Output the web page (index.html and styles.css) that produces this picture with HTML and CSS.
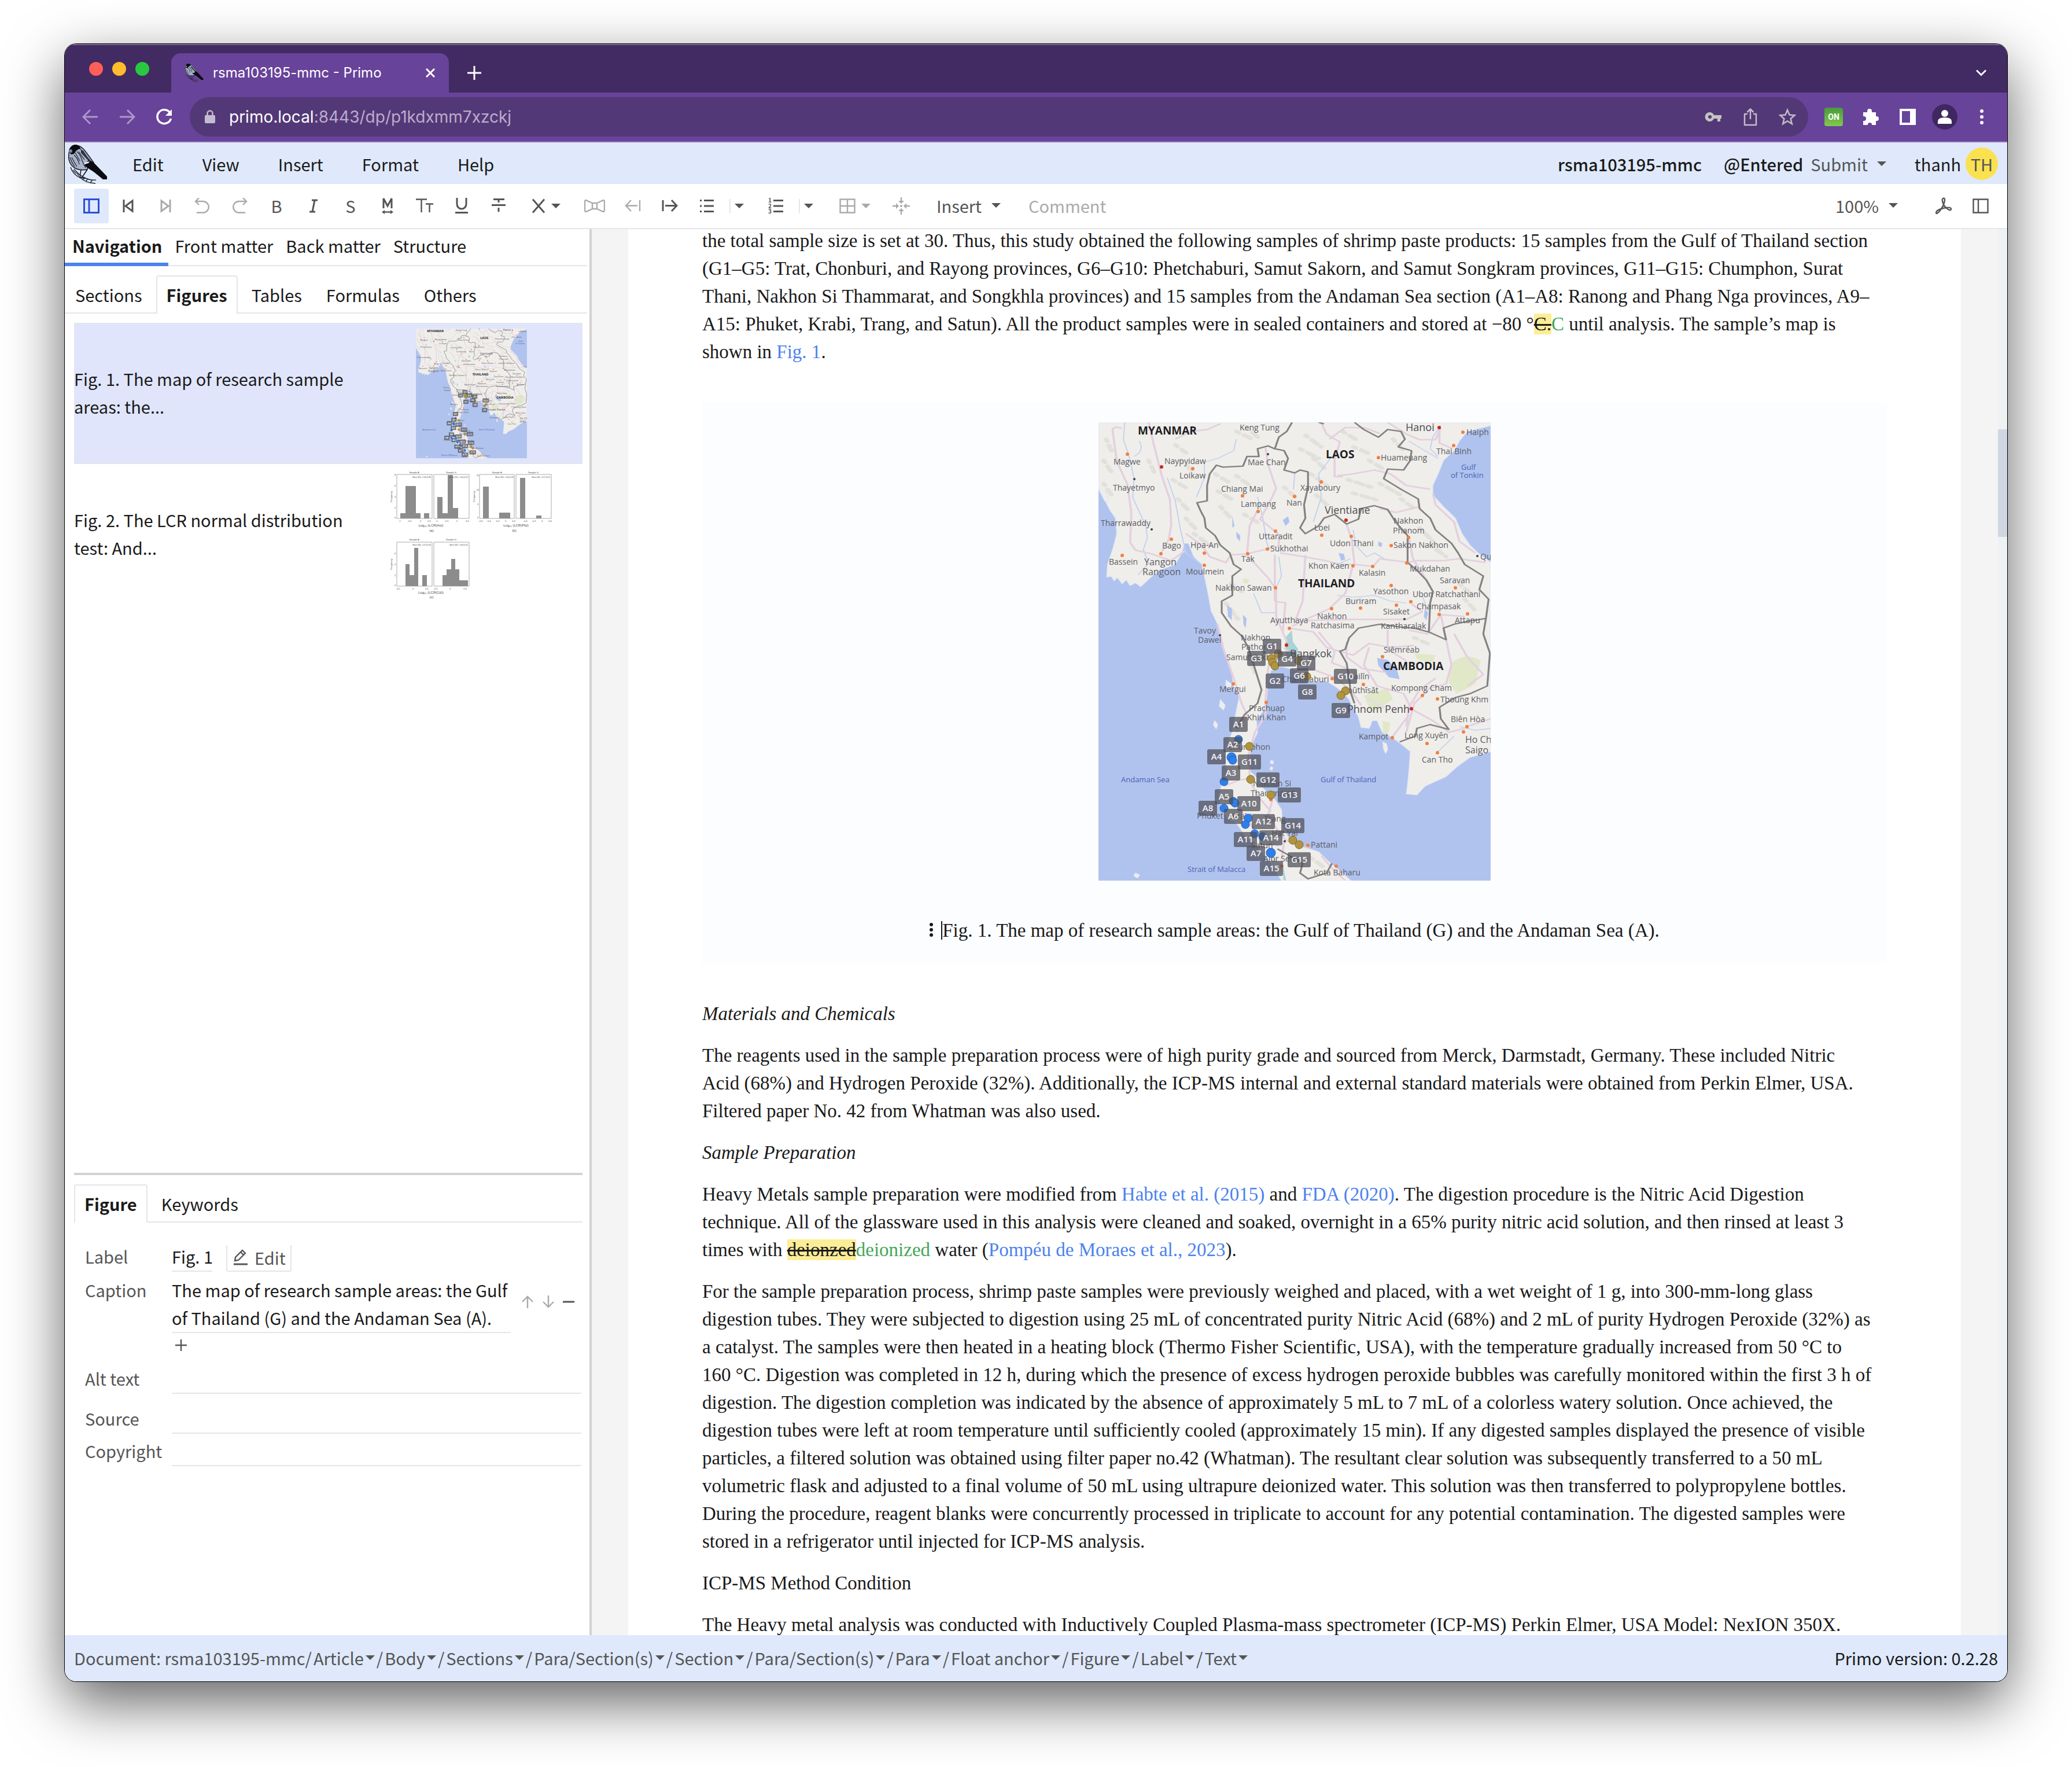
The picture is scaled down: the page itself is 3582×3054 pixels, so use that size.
FILE: index.html
```html
<!DOCTYPE html>
<html lang="en">
<head>
<meta charset="utf-8">
<title>rsma103195-mmc - Primo</title>
<link rel="stylesheet" href="styles.css">
</head>
<body>
<svg class="defs" aria-hidden="true">
  <symbol id="bird" viewBox="0 0 68 68">
    <path d="M2 9 Q6 0 14 1 Q24 3 30 12 L44 31 Q32 40 33 43 Q16 46 7 37 Q-1 28 1 16 Z" fill="#a9b4cb" stroke="#15181f" stroke-width="1.500"/>
    <path d="M1 12 Q3 1 12 0 Q20 1 21 7 Q14 8 10 16 L5 17 Z" fill="#0b0c10"/>
    <circle cx="4" cy="11" r="3" fill="#7f8899"/>
    <path d="M20 7 Q26 11 28 20 M15 12 Q22 18 24 28 M10 18 Q17 24 19 34 M6 22 Q10 30 15 38 M25 10 L38 30 M3 22 Q6 31 11 38 M18 12 L28 26 M23 26 L30 40 M12 14 L20 28" stroke="#1d212b" stroke-width="1.2" fill="none"/>
    <path d="M30 32 L36 26 L44 31 L67 55 L67 60 L60 60 L44 47 L33 40 L28 36 Z" fill="#0b0c10"/>
    <path d="M22 9 L40 29 L36 29 L22 14 Z" fill="#2a2f3b"/>
    <path d="M28 31 L37 29 L35 32 L28 34 Z" fill="#eef3fc"/>
    <path d="M33 43 L24 56 M22 44 L20 56 L28 58" stroke="#0b0c10" stroke-width="1.500" fill="none"/>
    <path d="M4 39 Q8 52 22 58 Q30 66 47 67 M10 42 Q18 52 26 56 Q36 62 48 61 M8 44 L14 50 M14 46 L18 54 M24 60 L30 58 M30 64 L34 59 M38 66 L42 61" stroke="#2a2f3b" stroke-width="1.500" fill="none"/>
  </symbol>

  <symbol id="map" viewBox="0 0 678 792">
    <rect width="678" height="792" fill="#b0c3ee"/>
    <g transform="matrix(.4591 0 0 .3333 -18.8 -21)" stroke-linejoin="round">
      <path class="land" d="M41 63V410L70 480 85 520 105 560 110 640 95 720 75 800 72 865 90 862 100 885 112 868 130 900 146 880 160 910 180 895 200 915 235 870 270 830 330 800 355 740 365 690 380 690 400 760 430 800 440 860 455 960 465 1040 490 1110 500 1170 520 1270 545 1380 550 1440 572 1480 560 1560 545 1670 520 1750 520 1810 525 1870 505 1940 495 2000 505 2070 530 2120 560 2140 600 2220 650 2280 690 2350 730 2438H990L960 2400 915 2350 870 2290 800 2260 760 2230 735 2160 730 2070 700 2010 660 1960 640 1910 610 1870 600 1790 620 1730 640 1670 635 1610 660 1560 675 1490 680 1410 690 1350 730 1330 790 1350 810 1400 850 1410 900 1405 930 1430 960 1460 985 1500 1000 1540 1020 1590 1030 1645 1060 1650 1072 1610 1090 1610 1110 1670 1150 1700 1180 1730 1215 1770 1210 1870 1205 1940 1200 1990 1240 1995 1270 1950 1350 1900 1390 1850 1440 1800 1518 1770V790L1470 740 1440 700 1410 640 1385 560 1340 500 1300 440 1300 390 1320 330 1340 260 1380 210 1400 160 1430 110 1518 80V63Z"/>
      <path class="land" d="M1112 1720l14 10 4 30-8 20-8-25zM690 1815l10 5-2 15-10-4zM690 1848l8 6-4 14-8-6zM500 1500l18 30-6 25-16-20zM478 1610l12 20-6 22-10-20zM522 1400l20 20-8 30-14-24zM42 400l26 20 10 60-14-10zM180 2400l16 10-8 16-14-12z"/>
      <path d="M1370 1310q60-60 110-10l-20 120-70 50-30-60zM1040 1480l90-40 20 60-80 70zM1230 1260l80 10-10 40-60-20zM1110 1610l30 10-6 50-20 10zM590 870l20 10-10 20-16-6z" fill="#e0e8c8"/>
      <path class="relief" d="M330 180l40 40M350 260l50 60M320 360l60 50M340 460l40 60M560 110l60 40M600 90l50 60M480 330l60 50M490 420l50 40M500 500l40 60M560 340l50 50M820 130l60 60M800 200l70 50M850 250l50 60M960 110l60 50M1000 190l70 40M1060 260l60 50M980 360l90 40M1000 430l100 40M1100 380l80 60M1180 460l50 50M1250 610l50 70M1290 700l60 60M1400 900l50 60M1420 980l40 60M70 150l20 60M60 260l30 60M60 380l30 60M230 260l20 60M370 560l40 60M400 640l60 60M520 1000l50 90M540 900l40 40M590 540l60 50M740 400l50 60M840 330l60 60M860 440l50 60M1230 1180l50 30M1060 1500l50 40M600 1280l30 80M700 2330l30 60M840 2320l50 50M1150 150l40 60"/>
      <path class="river" d="M140 63l-5 90 20 80 20 120-5 100 30 90 20 60 5 60-15 60 20 70-40 60M195 160q20 50-20 80M560 150l-10 60-60 40-50 20 0 80-30 100M300 350l30 120 20 150 20 120 60 60M640 450l20 110 15 130 10 30M780 330l-5 80M920 240l-50 90 10 120-30 130M1000 620l10 80 40 60 30-20 50 40M1210 160l60 50 50 40M940 960l60 10 80-10 60 30 60 10M720 760l10 100-20 60M625 950l30 100 50 0M1330 80l-30 60-10 60 30 40M1260 960l20 80M1400 1640l60 20 58-10M1380 1690l-60 80M900 780l40 20 50-30"/>
      <path class="lake" d="M735 570l20-20 5 30-15 20zM545 550l8 50-8 10zM560 630l15 20-2 30-12-20zM525 1010l18 20 0 60-14-20zM585 1060l14 20-4 50-8-20zM945 740l20 5 5 30-15 5zM1090 1285l40 10 35 50 10 50-40-10-40-60zM1270 1030l12 20-6 40-10-20zM1095 680l15 10-4 20-12-8z"/>
      <path d="M745 1180l24-40 4 60 20 40-6 50-40 0zM735 2350l12 88h-10z" fill="#a9d3d6"/>
      <path class="road" d="M130 95q-40-20-35 20l15 150 40 120 15 150-5 150 20 40 60 20 75 35 50-50M230 63l20 120 30 160 30 120 5 130-10 80-25 60M330 150l60-40 60-10 50-30M370 640l60 60 30 60 60 30 20-40 60-5 120-40 0-60-70-80 40-100 20-60-30-120-10-90M640 520l-30 80-10 150 80 120 30 60 0 140 40 130M725 740l90 20 80 20 60 20 45 0M705 750l0 240 40 10-10 150M820 750l-10 240-30 110M1000 800l-30 150-60 80-80 50-60 40M975 590l20 80 10 130 70 10 25-40 110 20 20-10 110 0 60-10 100 20M960 345l-30 0 0-90 20-90-50-40-20-60M940 340l60-10 80-20 60 20 60 60 90 20M910 150l60-60 70 0 60 30M1130 63l70 60 50 30 60 0 20-60M1325 90l0 80 50 30M1300 430l10 60 70 90 20 100 60 60M1100 510l60 20 90-30M1210 660l15 110 60 130 20 50M830 1090l170-5 200 0 60-40-40-40M1210 1140l70 20 50-100 90 10M1330 1060l20 130 20 130-20 100-60 20-60 80-30 150M760 1130l90 20 50 80 100 40 60-60 80 20 90-10M975 1200l0 80 60 60 90 20M870 1150l60 100-10 60 60 30M740 1230l60 90 60 30 80 40 60 80 30 60M490 1110l20 120 40 160 30 130 20 60-40 90M700 1200l-20 140-10 160 0 80-40 90-20 100 0 150 30 80 50 80M515 1950l50-30 40-10M700 2000l-20 100 50 110 40 40 60 20M580 2080l60 120 80 60M740 2240l-10 90M880 2310l50 80 40 48M1200 1640l10-100 40-90 60-60M1220 1550l80 60 60 60 60-20M1150 1690l60-110M1380 1160l50 120 60 90-60 60M1060 1230l-20 90 50 110 100 40 30 80M1430 1640l88-40M1130 1140l0 100 70 60"/>
      <path class="border" d="M770 63l-20 47-30 30-15 60-25-15-40 15 5 40-45 0-15 50-75 5-25-10-25 45-10 60 0 80-38 10 13 40 15 40 5 50 35 40 20 50 35 40 15 60 28 25-33 35 0 100-40 30 0 60 35 70 40 50 25 60 25 110 25 110-15 70-50 60-30 70M705 200l35 10 15 40-15 60 40 15 20-15 30 10 0 80-15 90 5 70-20 50 20 30 50-40 20-40 40-20 45 50 45-25 10-55 50-15 50 20 30 65 45 70 0 140 35 40 35 50 25 60-10 60-5 150-55-20-50-5-80-15-80 20-35 50-15 60-20 10 25 60 10 80 5 70 15 60M1005 63l35 37 55 40 35-40 50 10 15 40-25 40 50 20-5 50-25 50-60-5-15 50 65 55 65 50 5 50 40 50 20 60 60 70 25 50 25 60 70 60-15 70 35 50-10 100-70 15-50 15-40 20 10 60-65-40M1500 1080l-10 80 25 100-10 170-65 40-55 20-60 50 5 60 30 55-70-25-50 20-5 40-60 30M715 2275l45 35 50 40-10 50 30 30 70-30 20-50M870 63l20 8"/>
    </g>
    <g class="towns">
      <circle cx="50" cy="55" r="3"/><circle cx="163" cy="80" r="3"/><circle cx="249" cy="127" r="3"/><circle cx="339" cy="128" r="3"/><circle cx="385" cy="103" r="3"/><circle cx="276" cy="154" r="3"/><circle cx="484" cy="61" r="3"/><circle cx="614" cy="40" r="3"/><circle cx="630" cy="17" r="3"/><circle cx="306" cy="188" r="3"/><circle cx="386" cy="195" r="3"/><circle cx="437" cy="197" r="3"/><circle cx="536" cy="199" r="3"/><circle cx="506" cy="213" r="3"/><circle cx="292" cy="219" r="3"/><circle cx="258" cy="227" r="3"/><circle cx="126" cy="202" r="3"/><circle cx="108" cy="227" r="3"/><circle cx="41" cy="230" r="3"/><circle cx="183" cy="226" r="3"/><circle cx="183" cy="247" r="3"/><circle cx="440" cy="248" r="3"/><circle cx="474" cy="249" r="3"/><circle cx="533" cy="243" r="3"/><circle cx="306" cy="286" r="3"/><circle cx="506" cy="282" r="3"/><circle cx="617" cy="286" r="3"/><circle cx="403" cy="322" r="3"/><circle cx="453" cy="321" r="3"/><circle cx="515" cy="316" r="3"/><circle cx="540" cy="310" r="3"/><circle cx="589" cy="332" r="3"/><circle cx="638" cy="331" r="3"/><circle cx="330" cy="356" r="3"/><circle cx="491" cy="405" r="3"/><circle cx="404" cy="443" r="3"/><circle cx="458" cy="453" r="3"/><circle cx="560" cy="472" r="3"/><circle cx="586" cy="478" r="3"/><circle cx="233" cy="452" r="3"/><circle cx="290" cy="484" r="3"/><circle cx="508" cy="545" r="3"/><circle cx="568" cy="555" r="3"/><circle cx="586" cy="571" r="3"/><circle cx="637" cy="526" r="3"/><circle cx="631" cy="535" r="3"/><circle cx="298" cy="652" r="3"/><circle cx="362" cy="731" r="3"/><circle cx="411" cy="767" r="3"/><circle cx="317" cy="767" r="3"/>
    </g>
    <g fill="#c8281e"><circle cx="109" cy="77" r="3"/><circle cx="589" cy="9" r="3"/><circle cx="428" cy="169" r="3"/><circle cx="325" cy="385" r="3"/><circle cx="541" cy="495" r="3"/></g>
    <g fill="#3c3c46"><circle cx="62" cy="98" r="2"/><circle cx="293" cy="55" r="2"/><circle cx="92" cy="185" r="2"/><circle cx="655" cy="231" r="2"/><circle cx="529" cy="340" r="2"/><circle cx="210" cy="368" r="2"/><circle cx="322" cy="724" r="2"/></g>
    <g class="place">
      <text x="244" y="14">Keng Tung</text><text x="636" y="22">Haiph</text><text x="584" y="55">Thai Binh</text><text x="26" y="73">Magwe</text><text x="114" y="72">Naypyidaw</text><text x="140" y="97">Loikaw</text><text x="258" y="74">Mae Chan</text><text x="488" y="66">Huameuang</text><text x="25" y="118">Thayetmyo</text><text x="212" y="120">Chiang Mai</text><text x="349" y="118">Xayaboury</text><text x="246" y="146">Lampang</text><text x="325" y="144">Nan</text><text x="510" y="175">Nakhon</text><text x="509" y="192">Phanom</text><text x="4" y="179">Tharrawaddy</text><text x="373" y="187">Loei</text><text x="277" y="202">Uttaradit</text><text x="400" y="214">Udon Thani</text><text x="110" y="218">Bago</text><text x="159" y="217">Hpa-An</text><text x="510" y="217">Sakon Nakhon</text><text x="297" y="223">Sukhothai</text><text x="247" y="241">Tak</text><text x="18" y="246">Bassein</text><text x="151" y="263">Moulmein</text><text x="363" y="253">Khon Kaen</text><text x="450" y="265">Kalasin</text><text x="538" y="258">Mukdahan</text><text x="660" y="237">Qu</text><text x="202" y="291">Nakhon Sawan</text><text x="590" y="278">Saravan</text><text x="475" y="297">Yasothon</text><text x="543" y="302">Ubon Ratchathani</text><text x="427" y="314">Buriram</text><text x="492" y="332">Sisaket</text><text x="550" y="323">Champasak</text><text x="378" y="340">Nakhon</text><text x="367" y="356">Ratchasima</text><text x="297" y="347">Ayutthaya</text><text x="488" y="357">Kantharalak</text><text x="616" y="347">Attapu</text><text x="165" y="365">Tavoy</text><text x="172" y="381">Dawei</text><text x="246" y="377">Nakhon</text><text x="247" y="393">Pathom</text><text x="493" y="398">Siĕmréab</text><text x="221" y="411">Samut Sakhon</text><text x="317" y="449">Chanthaburi</text><text x="433" y="444">Pailĭn</text><text x="422" y="468">Poŭthĭsăt</text><text x="506" y="464">Kompong Cham</text><text x="591" y="484">Tboung Khm</text><text x="209" y="466">Mergui</text><text x="260" y="499">Prachuap</text><text x="257" y="515">Khiri Khan</text><text x="609" y="518">Biên Hòa</text><text x="450" y="548">Kampot</text><text x="529" y="546">Long Xuyên</text><text x="224" y="566">Chumphon</text><text x="559" y="588">Can Tho</text><text x="267" y="629">Nakhon Si</text><text x="263" y="646">Thammarat</text><text x="170" y="685">Phuket</text><text x="231" y="686">Krabi</text><text x="286" y="690">Trang</text><text x="299" y="715">Hat Yai</text><text x="264" y="736">Satun</text><text x="367" y="735">Pattani</text><text x="285" y="759">Alor Setar</text><text x="372" y="783">Kota Baharu</text>
    </g>
    <g class="place city">
      <text x="531" y="15">Hanoi</text><text x="391" y="158">Vientiane</text><text x="331" y="406">Bangkok</text><text x="430" y="502">Phnom Penh</text>
    </g>
    <g class="place town">
      <text x="79" y="247">Yangon</text><text x="76" y="264">Rangoon</text><text x="634" y="554">Ho Ch</text><text x="634" y="572">Saigo</text>
    </g>
    <g class="place sea">
      <text x="627" y="82">Gulf</text><text x="609" y="96">of Tonkin</text><text x="39" y="622">Andaman Sea</text><text x="384" y="622">Gulf of Thailand</text><text x="154" y="777">Strait of Malacca</text>
    </g>
    <g class="place country">
      <text x="68" y="21">MYANMAR</text><text x="393" y="62">LAOS</text><text x="345" y="285">THAILAND</text><text x="492" y="428">CAMBODIA</text>
    </g>
    <g class="dot-a">
      <circle cx="242" cy="548" r="7"/><circle cx="230" cy="579" r="8"/><circle cx="232" cy="584" r="7"/><circle cx="217" cy="621" r="7"/><circle cx="233" cy="655" r="7"/><circle cx="236" cy="658" r="7"/><circle cx="217" cy="667" r="7"/><circle cx="259" cy="684" r="7"/><circle cx="254" cy="695" r="7"/><circle cx="270" cy="711" r="7"/><circle cx="284" cy="716" r="7"/><circle cx="298" cy="744" r="8"/>
    </g>
    <g class="dot-g">
      <circle cx="311" cy="400" r="7"/><circle cx="299" cy="408" r="7"/><circle cx="301" cy="415" r="7"/><circle cx="305" cy="421" r="7"/><circle cx="346" cy="412" r="7"/><circle cx="360" cy="439" r="7"/><circle cx="427" cy="464" r="7"/><circle cx="419" cy="472" r="7"/><circle cx="261" cy="560" r="7"/><circle cx="263" cy="617" r="7"/><circle cx="298" cy="644" r="7"/><circle cx="336" cy="722" r="7"/><circle cx="347" cy="730" r="7"/>
    </g>
    <g class="badges">
      <g transform="translate(300 387)"><rect x="-16" y="-13" width="32" height="26" rx="3"/><text y="5">G1</text></g>
      <g transform="translate(273 408)"><rect x="-16" y="-13" width="32" height="26" rx="3"/><text y="5">G3</text></g>
      <g transform="translate(326 409)"><rect x="-16" y="-13" width="32" height="26" rx="3"/><text y="5">G4</text></g>
      <g transform="translate(359 416)"><rect x="-16" y="-13" width="32" height="26" rx="3"/><text y="5">G7</text></g>
      <g transform="translate(347 438)"><rect x="-16" y="-13" width="32" height="26" rx="3"/><text y="5">G6</text></g>
      <g transform="translate(305 447)"><rect x="-16" y="-13" width="32" height="26" rx="3"/><text y="5">G2</text></g>
      <g transform="translate(361 466)"><rect x="-16" y="-13" width="32" height="26" rx="3"/><text y="5">G8</text></g>
      <g transform="translate(427 439)"><rect x="-20" y="-13" width="40" height="26" rx="3"/><text y="5">G10</text></g>
      <g transform="translate(419 498)"><rect x="-16" y="-13" width="32" height="26" rx="3"/><text y="5">G9</text></g>
      <g transform="translate(242 522)"><rect x="-16" y="-13" width="32" height="26" rx="3"/><text y="5">A1</text></g>
      <g transform="translate(232 557)"><rect x="-16" y="-13" width="32" height="26" rx="3"/><text y="5">A2</text></g>
      <g transform="translate(204 578)"><rect x="-16" y="-13" width="32" height="26" rx="3"/><text y="5">A4</text></g>
      <g transform="translate(261 587)"><rect x="-20" y="-13" width="40" height="26" rx="3"/><text y="5">G11</text></g>
      <g transform="translate(229 606)"><rect x="-16" y="-13" width="32" height="26" rx="3"/><text y="5">A3</text></g>
      <g transform="translate(293 618)"><rect x="-20" y="-13" width="40" height="26" rx="3"/><text y="5">G12</text></g>
      <g transform="translate(330 644)"><rect x="-20" y="-13" width="40" height="26" rx="3"/><text y="5">G13</text></g>
      <g transform="translate(217 647)"><rect x="-16" y="-13" width="32" height="26" rx="3"/><text y="5">A5</text></g>
      <g transform="translate(260 659)"><rect x="-20" y="-13" width="40" height="26" rx="3"/><text y="5">A10</text></g>
      <g transform="translate(189 667)"><rect x="-16" y="-13" width="32" height="26" rx="3"/><text y="5">A8</text></g>
      <g transform="translate(233 681)"><rect x="-16" y="-13" width="32" height="26" rx="3"/><text y="5">A6</text></g>
      <g transform="translate(285 690)"><rect x="-20" y="-13" width="40" height="26" rx="3"/><text y="5">A12</text></g>
      <g transform="translate(336 697)"><rect x="-20" y="-13" width="40" height="26" rx="3"/><text y="5">G14</text></g>
      <g transform="translate(254 721)"><rect x="-20" y="-13" width="40" height="26" rx="3"/><text y="5">A11</text></g>
      <g transform="translate(298 718)"><rect x="-20" y="-13" width="40" height="26" rx="3"/><text y="5">A14</text></g>
      <g transform="translate(272 745)"><rect x="-16" y="-13" width="32" height="26" rx="3"/><text y="5">A7</text></g>
      <g transform="translate(347 756)"><rect x="-20" y="-13" width="40" height="26" rx="3"/><text y="5">G15</text></g>
      <g transform="translate(299 771)"><rect x="-20" y="-13" width="40" height="26" rx="3"/><text y="5">A15</text></g>
    </g>
  </symbol>
</svg>

<div class="window">
  <header class="titlebar">
    <div class="lights">
      <button class="light red" aria-label="Close"></button>
      <button class="light amber" aria-label="Minimise"></button>
      <button class="light green" aria-label="Zoom"></button>
    </div>
    <div class="browser-tab">
      <svg class="favicon"><use href="#bird"/></svg>
      <span class="tab-title">rsma103195-mmc - Primo</span>
      <button class="plain" aria-label="Close tab"><svg width="16" height="16" viewBox="0 0 16 16"><path d="M1 1L15 15M15 1L1 15" class="w3"/></svg></button>
    </div>
    <button class="plain new-tab" aria-label="New tab"><svg width="24" height="24" viewBox="0 0 24 24"><path d="M12 0V24M0 12H24" class="w3"/></svg></button>
    <button class="plain tab-search" aria-label="Search tabs"><svg width="18" height="12" viewBox="0 0 18 12"><path d="M1 1.500L9 9.500L17 1.500" class="w3"/></svg></button>
  </header>

  <div class="addressbar">
    <div class="history">
      <button class="plain" aria-label="Back"><svg width="28" height="28" viewBox="0 0 28 28" class="faded"><path d="M27 14H2M14 2L2 14L14 26" class="w3"/></svg></button>
      <button class="plain" aria-label="Forward"><svg width="28" height="28" viewBox="0 0 28 28" class="faded"><path d="M1 14H26M14 2L26 14L14 26" class="w3"/></svg></button>
      <button class="plain" aria-label="Reload"><svg width="28" height="28" viewBox="0 0 28 28"><path d="M24 7A12 12 0 1 0 25.500 17" fill="none" stroke="#fff" stroke-width="3.500"/><path d="M27 1V12H16Z" fill="#fff"/></svg></button>
    </div>
    <div class="url">
      <svg width="18" height="24" viewBox="0 0 18 24"><rect y="9" width="18" height="14" rx="2" fill="#c3bccf"/><path d="M4.500 10V6a4.500 4.500 0 0 1 9 0V10" fill="none" stroke="#c3bccf" stroke-width="2.500"/></svg>
      <span class="address">primo.local<span class="path">:8443/dp/p1kdxmm7xzckj</span></span>
      <button class="plain" aria-label="Passwords"><svg width="32" height="32" viewBox="0 0 32 32"><path fill-rule="evenodd" d="M10 8a8 8 0 1 0 7 11h6v5h5v-5h2v-6H17A8 8 0 0 0 10 8Zm0 5a3 3 0 1 1 0 6a3 3 0 0 1 0-6Z" fill="#c3c3c3"/></svg></button>
      <button class="plain" aria-label="Share"><svg width="32" height="32" viewBox="0 0 32 32"><path d="M11 11H6V30H26V11H21M16 20V3M10.500 8L16 2.500L21.500 8" fill="none" stroke="#c3bcc9" stroke-width="2.500" stroke-linejoin="round"/></svg></button>
      <button class="plain" aria-label="Bookmark"><svg width="32" height="32" viewBox="0 0 32 32"><path d="M16 4L19.500 12.500L28.500 13.200L21.600 19.200L23.800 28L16 23.200L8.200 28L10.400 19.200L3.500 13.200L12.500 12.500Z" fill="none" stroke="#c3bcc9" stroke-width="2.500"/></svg></button>
    </div>
    <div class="extensions">
      <button class="plain on-badge">ON</button>
      <button class="plain" aria-label="Extensions"><svg width="32" height="32" viewBox="0 0 32 32"><path d="M3 8H10V6a4 4 0 0 1 8 0V8H25V15h1a4 4 0 0 1 0 8H25V30H18V28a4 4 0 0 0-7 0V30H3V23H4a4 4 0 0 0 0-8H3Z" fill="#fff"/></svg></button>
      <button class="plain" aria-label="Side panel"><svg width="32" height="32" viewBox="0 0 32 32"><path fill-rule="evenodd" d="M2 2H30V30H2ZM6 6V26H20V6Z" fill="#fff"/></svg></button>
      <button class="plain" aria-label="Profile"><svg width="44" height="44" viewBox="0 0 44 44"><circle cx="22" cy="22" r="22" fill="#3f2762"/><circle cx="22" cy="16" r="6" fill="#fff"/><path d="M10 34V30q0-7 12-7t12 7V34Z" fill="#fff"/></svg></button>
      <button class="plain" aria-label="Menu"><svg width="32" height="32" viewBox="0 0 32 32" fill="#fff"><circle cx="16" cy="6" r="3"/><circle cx="16" cy="16" r="3"/><circle cx="16" cy="26" r="3"/></svg></button>
    </div>
  </div>

  <header class="appbar">
    <svg class="logo"><use href="#bird"/></svg>
    <nav class="menus"><button>Edit</button><button>View</button><button>Insert</button><button>Format</button><button>Help</button></nav>
    <strong class="doc-name">rsma103195-mmc</strong>
    <strong>@Entered</strong>
    <button class="submit">Submit <i class="caret"></i></button>
    <span class="user">thanh</span><span class="avatar">TH</span>
  </header>

  <div class="toolbar">
    <button class="tool active" aria-label="Left panel"><svg width="28" height="28" viewBox="0 0 28 28"><path d="M1.500 2.500H26.500V25.500H1.500ZM10 2.500V25.500" class="s3"/></svg></button>
    <button class="tool" aria-label="Previous"><svg width="28" height="28" viewBox="0 0 28 28"><path d="M6 3V25M21 5V23L9 14Z" class="s3"/></svg></button>
    <button class="tool off" aria-label="Next"><svg width="28" height="28" viewBox="0 0 28 28"><path d="M22 3V25M7 5V23L19 14Z" class="s3"/></svg></button>
    <button class="tool off" aria-label="Undo"><svg width="28" height="28" viewBox="0 0 28 28"><path d="M8 0L2 6L8 12M2 6H15a9.500 9.500 0 0 1 0 19.500H4" class="s2"/></svg></button>
    <button class="tool off" aria-label="Redo"><svg width="28" height="28" viewBox="0 0 28 28"><path d="M20 0L26 6L20 12M26 6H13a9.500 9.500 0 0 0 0 19.500H24" class="s2"/></svg></button>
    <button class="tool letter">B</button>
    <button class="tool" aria-label="Italic"><svg width="28" height="28" viewBox="0 0 28 28"><path d="M11 4H21M7 24H17M16 4L12 24" class="s3"/></svg></button>
    <button class="tool letter">S</button>
    <button class="tool" aria-label="Monospace"><svg width="32" height="36" viewBox="0 0 32 36"><path d="M9 22V5L16 18L23 5V22" class="s3"/><path d="M8 28.500H24" class="s2"/><path d="M11 25V32L6 28.500ZM21 25V32L26 28.500Z" fill="currentColor"/></svg></button>
    <button class="tool" aria-label="Small caps"><svg width="32" height="36" viewBox="0 0 32 36"><path d="M1 6.500H20M10.500 6.500V29M18 14.500H31M24.500 14.500V29" class="s2"/></svg></button>
    <button class="tool" aria-label="Underline"><svg width="32" height="36" viewBox="0 0 32 36"><path d="M8 4V15a8 8 0 0 0 16 0V4M5 29.500H27" class="s3"/></svg></button>
    <button class="tool" aria-label="Strikethrough"><svg width="32" height="36" viewBox="0 0 32 36"><path d="M7 6.500H26M16 6V12M4 16.500H28M16 21V28" class="s3"/></svg></button>
    <button class="tool wide" aria-label="Scripts"><svg width="24" height="28" viewBox="0 0 24 28"><path d="M2 2.500L22 25.500M22 2.500L2 25.500" class="s3"/></svg><i class="caret"></i></button>
    <button class="tool off ligature" aria-label="Ligature"><svg width="36" height="28" viewBox="0 0 36 28"><path d="M14 9L3 4Q1 4 1 7V21Q1 24 3 24L14 19ZM22 9L33 4Q35 4 35 7V21Q35 24 33 24L22 19ZM14 9H22V19H14Z" class="s2"/></svg></button>
    <button class="tool off" aria-label="Outdent"><svg width="28" height="28" viewBox="0 0 28 28"><path d="M26 4V23M22 13.500H2M11 4L2 13.500L11 23" class="s2"/></svg></button>
    <button class="tool" aria-label="Indent"><svg width="28" height="28" viewBox="0 0 28 28"><path d="M2 4V23M6 13.500H26M17 4L26 13.500L17 23" class="s3"/></svg></button>
    <button class="tool" aria-label="Bulleted list"><svg width="28" height="28" viewBox="0 0 28 28"><path d="M9 4.500H26M9 14H26M9 23.500H26M2 4.500H5M2 14H5M2 23.500H5" class="s3"/></svg></button>
    <button class="tool drop" aria-label="List style"><i class="caret"></i></button>
    <button class="tool" aria-label="Numbered list"><svg width="28" height="28" viewBox="0 0 28 28"><path d="M9 4.500H26M9 14H26M9 23.500H26" class="s3"/><text x="3" y="8" class="t9">1</text><text x="3" y="18" class="t9">2</text><text x="3" y="27" class="t9">3</text></svg></button>
    <button class="tool drop" aria-label="Number style"><i class="caret"></i></button>
    <button class="tool table off" aria-label="Table"><svg width="28" height="28" viewBox="0 0 28 28"><path d="M1.500 2.500H26.500V25.500H1.500ZM14 2.500V25.500M1.500 14H26.500" class="s2"/></svg><i class="caret"></i></button>
    <button class="tool off" aria-label="Centre"><svg width="32" height="32" viewBox="0 0 32 32"><path d="M16 1V11M16 31V21M1 16H11M31 16H21" class="s2"/><path d="M11 7H21L16 12ZM11 25H21L16 20ZM7 11V21L12 16ZM25 11V21L20 16Z" fill="currentColor"/><circle cx="16" cy="16" r="2" fill="currentColor"/></svg></button>
    <button class="tool words">Insert <i class="caret"></i></button>
    <button class="tool words off">Comment</button>
    <span class="spacer"></span>
    <button class="tool words zoom">100% <i class="caret"></i></button>
    <button class="tool" aria-label="PDF"><svg width="32" height="32" viewBox="0 0 32 32"><path d="M15 3Q18 1 18 6Q17 15 9 25Q4 31 3 28Q3 23 15 20Q28 17 29 21Q29 25 24 22Q16 17 14 8Q13 4 15 3Z" class="s2"/></svg></button>
    <button class="tool" aria-label="Right panel"><svg width="28" height="28" viewBox="0 0 28 28"><path d="M1.500 2.500H26.500V25.500H1.500ZM10 2.500V25.500" class="s2"/></svg></button>
  </div>

  <div class="workspace">
    <aside class="sidebar">
      <nav class="main-tabs"><button class="current">Navigation</button><button>Front matter</button><button>Back matter</button><button>Structure</button></nav>
      <nav class="box-tabs"><button>Sections</button><button class="current">Figures</button><button>Tables</button><button>Formulas</button><button>Others</button></nav>
      <div class="figure-list">
        <div class="figure-row selected">
          <p>Fig. 1. The map of research sample<br>areas: the...</p>
          <svg class="map-thumb"><use href="#map"/></svg>
        </div>
        <div class="figure-row">
          <p>Fig. 2. The LCR normal distribution<br>test: And...</p>
          <svg class="charts" viewBox="0 0 288 224">
            <g class="frame"><path d="M15 8H76V84H15ZM79 8H140V84H79ZM158 8H218V84H158ZM221 8H282V84H221Z"/><path d="M15 125H76V201H15ZM79 125H140V201H79Z"/></g>
            <g class="bars"><path d="M21 84V75H30V28H48V75H56V84ZM62 84V75H71V84ZM85 84V47H94V75H103V9H112V66H121V84ZM164 84V29H174V84ZM192 84V74H211V84ZM228 84V14H237V84ZM256 84V79H265V84Z"/><path d="M30 201V163H37V182H45V135H52V201ZM59 201V182H67V201ZM94 201V182H101V172H109V154H116V172H123V191H138V201Z"/></g>
            <g class="chart-text">
              <text x="45" y="6">Sample A</text><text x="109" y="6">Sample G</text><text x="188" y="6">Sample A</text><text x="251" y="6">Sample G</text><text x="45" y="122">Sample A</text><text x="109" y="122">Sample G</text>
              <text x="20" y="90">-1</text><text x="37" y="90">-0.5</text><text x="56" y="90">0</text><text x="71" y="90">0.5</text><text x="84" y="90">-1</text><text x="101" y="90">-0.5</text><text x="119" y="90">0</text><text x="137" y="90">0.5</text><text x="160" y="90">-0.6</text><text x="174" y="90">-0.4</text><text x="189" y="90">-0.2</text><text x="203" y="90">0</text><text x="217" y="90">0.4</text><text x="237" y="90">-0.4</text><text x="252" y="90">-0.2</text><text x="266" y="90">0</text><text x="280" y="90">0.4</text>
              <text x="17" y="207">-0.5</text><text x="43" y="207">0</text><text x="67" y="207">0.5</text><text x="82" y="207">-0.5</text><text x="107" y="207">0</text><text x="133" y="207">0.5</text>
              <text x="12" y="10">8</text><text x="12" y="29">6</text><text x="12" y="48">4</text><text x="12" y="67">2</text><text x="12" y="84">0</text><text x="155" y="11">15</text><text x="155" y="36">10</text><text x="155" y="61">5</text><text x="155" y="84">0</text><text x="12" y="146">6</text><text x="12" y="165">4</text><text x="12" y="184">2</text><text x="12" y="201">0</text>
              <text transform="translate(7 46) rotate(-90)">Frequency</text><text transform="translate(150 46) rotate(-90)">Frequency</text><text transform="translate(7 163) rotate(-90)">Frequency</text>
            </g>
            <g class="chart-text mean"><text x="74" y="14">Mean (SD): -0.44 (0.38)</text><text x="138" y="14">Mean (SD): -0.46 (0.25)</text><text x="217" y="14">Mean (SD): -0.43 (0.23)</text><text x="280" y="14">Mean (SD): -0.57 (0.12)</text><text x="74" y="131">Mean (SD): -0.07 (0.20)</text><text x="138" y="131">Mean (SD): -0.08 (0.15)</text></g>
            <g class="chart-text axis"><text x="74" y="98">Log₁₀ (LCR(As))</text><text x="221" y="98">Log₁₀ (LCR(Pb))</text><text x="74" y="214">Log₁₀ (LCR(Cd))</text><text x="75" y="107">(a)</text><text x="218" y="107">(b)</text><text x="75" y="222">(c)</text></g>
          </svg>
        </div>
      </div>
      <section class="details">
        <nav class="box-tabs"><button class="current">Figure</button><button>Keywords</button></nav>
        <form class="fields">
          <div class="field"><label for="f-label">Label</label><input id="f-label" class="short" value="Fig. 1"><button type="button" class="edit"><svg width="28" height="28" viewBox="0 0 28 28"><path d="M2 26H26" class="s3"/><path d="M4 20L5 14L17 2L22 7L10 19ZM14 5L19 10" class="s2"/></svg>Edit</button></div>
          <div class="field"><label for="f-caption">Caption</label>
            <div class="caption-col"><textarea id="f-caption" rows="2">The map of research sample areas: the Gulf
of Thailand (G) and the Andaman Sea (A).</textarea>
              <button type="button" class="plain add" aria-label="Add"><svg width="20" height="20" viewBox="0 0 20 20"><path d="M10 0V20M0 10H20" class="s2"/></svg></button></div>
            <div class="moves">
              <button type="button" class="plain off" aria-label="Move up"><svg width="22" height="22" viewBox="0 0 22 22"><path d="M11 22V2M2 11L11 2L20 11" class="s2"/></svg></button>
              <button type="button" class="plain off" aria-label="Move down"><svg width="22" height="22" viewBox="0 0 22 22"><path d="M11 0V20M2 11L11 20L20 11" class="s2"/></svg></button>
              <button type="button" class="plain" aria-label="Remove"><svg width="20" height="22" viewBox="0 0 20 22"><path d="M0 11H20" class="s3"/></svg></button>
            </div></div>
          <div class="field alt"><label for="f-alt">Alt text</label><input id="f-alt"></div>
          <div class="field"><label for="f-source">Source</label><input id="f-source"></div>
          <div class="field"><label for="f-copy">Copyright</label><input id="f-copy"></div>
        </form>
      </section>
    </aside>

    <main class="canvas">
      <article class="paper">
        <p>the total sample size is set at 30. Thus, this study obtained the following samples of shrimp paste products: 15 samples from the Gulf of Thailand section<br>(G1–G5: Trat, Chonburi, and Rayong provinces, G6–G10: Phetchaburi, Samut Sakorn, and Samut Songkram provinces, G11–G15: Chumphon, Surat<br>Thani, Nakhon Si Thammarat, and Songkhla provinces) and 15 samples from the Andaman Sea section (A1–A8: Ranong and Phang Nga provinces, A9–<br>A15: Phuket, Krabi, Trang, and Satun). All the product samples were in sealed containers and stored at −80 °<del>C.</del><ins>C</ins> until analysis. The sample’s map is<br>shown in <a href="#fig1">Fig. 1</a>.</p>
        <figure id="fig1">
          <svg class="map-full" role="img" aria-label="Map of Thailand"><use href="#map"/></svg>
          <figcaption><svg class="grip" width="6" height="28" viewBox="0 0 6 28" fill="#1a1a1a"><circle cx="3" cy="4" r="3"/><circle cx="3" cy="13" r="3"/><circle cx="3" cy="22" r="3"/></svg><span class="cursor"></span>Fig. 1. The map of research sample areas: the Gulf of Thailand (G) and the Andaman Sea (A).</figcaption>
        </figure>
        <h3>Materials and Chemicals</h3>
        <p>The reagents used in the sample preparation process were of high purity grade and sourced from Merck, Darmstadt, Germany. These included Nitric<br>Acid (68%) and Hydrogen Peroxide (32%). Additionally, the ICP-MS internal and external standard materials were obtained from Perkin Elmer, USA.<br>Filtered paper No. 42 from Whatman was also used.</p>
        <h3>Sample Preparation</h3>
        <p>Heavy Metals sample preparation were modified from <a href="#r1">Habte et al. (2015)</a> and <a href="#r2">FDA (2020)</a>. The digestion procedure is the Nitric Acid Digestion<br>technique. All of the glassware used in this analysis were cleaned and soaked, overnight in a 65% purity nitric acid solution, and then rinsed at least 3<br>times with <del>deionzed</del><ins>deionized</ins> water (<a href="#r3">Pompéu de Moraes et al., 2023</a>).</p>
        <p>For the sample preparation process, shrimp paste samples were previously weighed and placed, with a wet weight of 1 g, into 300-mm-long glass<br>digestion tubes. They were subjected to digestion using 25 mL of concentrated purity Nitric Acid (68%) and 2 mL of purity Hydrogen Peroxide (32%) as<br>a catalyst. The samples were then heated in a heating block (Thermo Fisher Scientific, USA), with the temperature gradually increased from 50 °C to<br>160 °C. Digestion was completed in 12 h, during which the presence of excess hydrogen peroxide bubbles was carefully monitored within the first 3 h of<br>digestion. The digestion completion was indicated by the absence of approximately 5 mL to 7 mL of a colorless watery solution. Once achieved, the<br>digestion tubes were left at room temperature until sufficiently cooled (approximately 15 min). If any digested samples displayed the presence of visible<br>particles, a filtered solution was obtained using filter paper no.42 (Whatman). The resultant clear solution was subsequently transferred to a 50 mL<br>volumetric flask and adjusted to a final volume of 50 mL using ultrapure deionized water. This solution was then transferred to polypropylene bottles.<br>During the procedure, reagent blanks were concurrently processed in triplicate to account for any potential contamination. The digested samples were<br>stored in a refrigerator until injected for ICP-MS analysis.</p>
        <h3 class="upright">ICP-MS Method Condition</h3>
        <p>The Heavy metal analysis was conducted with Inductively Coupled Plasma-mass spectrometer (ICP-MS) Perkin Elmer, USA Model: NexION 350X.</p>
      </article>
      <div class="scrollbar"><div class="thumb"></div></div>
    </main>
  </div>

  <footer class="statusbar">
    <span>Document: rsma103195-mmc</span>
    <button>Article<i class="caret"></i></button><button>Body<i class="caret"></i></button><button>Sections<i class="caret"></i></button><button>Para/Section(s)<i class="caret"></i></button><button>Section<i class="caret"></i></button><button>Para/Section(s)<i class="caret"></i></button><button>Para<i class="caret"></i></button><button>Float anchor<i class="caret"></i></button><button>Figure<i class="caret"></i></button><button>Label<i class="caret"></i></button><button>Text<i class="caret"></i></button>
    <span class="version">Primo version: 0.2.28</span>
  </footer>
</div>
</body>
</html>
```
FILE: styles.css
```css
* { box-sizing: border-box; }
body {
  margin: 0;
  padding: 76px 112px 148px;
  height: 100vh;
  background: #fff;
  color: #1a1a1a;
  font: 29px/48px "Noto Sans CJK SC", "Noto Sans", sans-serif;
  overflow: hidden;
}
button, input, textarea { font: inherit; color: inherit; background: none; border: 0; padding: 0; margin: 0; border-radius: 0; }
button { white-space: nowrap; }
svg { display: block; flex: none; }
.defs { position: absolute; width: 0; height: 0; }
p, h3, figure { margin: 0; }
strong { font-weight: 500; }

.window {
  height: 100%;
  display: flex;
  flex-direction: column;
  border-radius: 20px;
  overflow: hidden;
  background: #fff;
  box-shadow: 0 0 0 1px #000, 0 36px 100px rgba(0,0,0,.62);
}
.plain { display: flex; align-items: center; justify-content: center; }
.w3 { fill: none; stroke: #fff; stroke-width: 3; }
.s2 { fill: none; stroke: currentColor; stroke-width: 2.4; }
.s3 { fill: none; stroke: currentColor; stroke-width: 3; }
.faded { opacity: .45; }
.caret { width: 0; height: 0; border: 8px solid transparent; border-top-color: currentColor; border-bottom: 0; flex: none; }

/* Browser chrome */
.titlebar { display: flex; height: 84px; flex: none; background: #422a63; box-shadow: inset 0 2px rgba(255,255,255,.3); padding: 16px 36px 0 42px; }
.lights { display: flex; gap: 16px; padding-top: 15px; width: 142px; }
.light { width: 24px; height: 24px; border-radius: 50%; }
.red { background: #ff5f57; }
.amber { background: #febc2e; }
.green { background: #28c840; }
.browser-tab { display: flex; align-items: center; width: 480px; height: 68px; padding: 0 24px; background: #68439a; border-radius: 16px 16px 0 0; color: #fff; font: 24px/32px Inter, sans-serif; }
.favicon { width: 32px; height: 32px; margin-right: 16px; }
.tab-title { flex: 1; }
.new-tab { width: 40px; margin-left: 24px; }
.tab-search { margin-left: auto; }
.addressbar { display: flex; align-items: center; height: 86px; flex: none; background: #68439a; border-bottom: 2px solid #8c6cb4; padding: 0 28px; }
.history { display: flex; gap: 36px; width: 188px; padding-left: 2px; }
.url { display: flex; align-items: center; flex: 1; height: 68px; border-radius: 34px; background: #533877; padding: 0 20px 0 26px; gap: 32px; color: #fff; font: 28px/36px Inter, sans-serif; }
.address { flex: 1; margin-left: -8px; }
.path { color: #bcaccd; }
.extensions { display: flex; align-items: center; gap: 32px; padding-left: 28px; }
.extensions .plain { width: 32px; }
.on-badge { height: 32px; border-radius: 4px; background: linear-gradient(#489a3c, #82c94c); color: #fff; font: bold 14px/20px Roboto, sans-serif; }

/* Application bar */
.appbar { display: flex; align-items: center; height: 72px; flex: none; background: #dfe9fb; padding: 2px 16px 0 6px; }
.logo { width: 68px; height: 68px; margin-right: 43px; align-self: flex-end; }
.menus { display: flex; gap: 67px; flex: 1; }
.doc-name { margin-right: 38px; }
.submit { display: flex; align-items: center; color: #555; margin: 0 49px 0 13px; gap: 16px; }
.avatar { width: 56px; height: 56px; margin-left: 8px; border-radius: 50%; background: #fae150; color: #555; text-align: center; line-height: 56px; }

/* Toolbar */
.toolbar { display: flex; align-items: center; gap: 4px; height: 78px; flex: none; border-bottom: 2px solid #e5e5ea; padding: 0 16px; color: #555; }
.tool { display: flex; align-items: center; justify-content: center; flex: none; width: 60px; height: 60px; border-radius: 4px; }
.active { background: #dfe9fb; color: #2a50d8; }
.off { color: #aaa; }
.letter { padding-bottom: 2px; }
.wide { width: 96px; gap: 10px; }
.table { width: 92px; gap: 10px; }
.ligature { width: 64px; }
.drop { width: 47px; height: 24px; margin-left: 5px; border-left: 2px solid #e5e5ea; border-radius: 0; justify-content: flex-start; padding-left: 7px; }
.words { width: auto; padding: 0 26px 2px 27px; gap: 17px; }
.words + .words { padding: 0 18px 2px; }
.spacer { flex: 1; }
.words.zoom { padding-right: 45px; }
.t9 { font-size: 10px; font-weight: bold; text-anchor: middle; fill: currentColor; }

/* Sidebar */
.workspace { display: flex; flex: 1; min-height: 0; }
.sidebar { display: flex; flex-direction: column; flex: none; width: 911px; border-right: 4px solid #d2d2d2; }
.main-tabs { display: flex; height: 64px; margin-right: 4px; box-shadow: inset 0 -2px #e5e5ea; }
.main-tabs button { padding: 0 11px 2px; border-bottom: 6px solid transparent; }
.main-tabs .current { padding-left: 13px; border-color: #4c82ee; font-weight: 700; }
.box-tabs { display: flex; gap: 6px; height: 66px; box-shadow: inset 0 -2px #e5e5ea; }
.box-tabs button { padding: 0 16px 2px; border: 2px solid transparent; border-bottom: 0; }
.box-tabs .current { background: #fff; border-color: #e5e5ea; border-radius: 4px 4px 0 0; font-weight: 700; }
.sidebar > .box-tabs { margin: 16px 4px 0 0; }
.figure-list { flex: 1; padding: 16px 12px 0 16px; }
.figure-row { display: grid; grid-template-columns: 1fr 384px; align-items: center; justify-items: center; height: 244px; border: 2px solid transparent; border-width: 2px 0; }
.figure-row p { justify-self: start; padding-bottom: 4px; }
.selected { background: #e0e5fb; border-color: #e2e4ea; }
.map-thumb { width: 192px; height: 224px; }
.charts { width: 288px; height: 224px; }
.frame { fill: #fff; stroke: #aaa; stroke-width: 1; }
.bars { fill: #8c8c8c; }
.chart-text { font: 4px/6px "Liberation Sans", sans-serif; fill: #444; text-anchor: middle; }
.mean { font-size: 3px; text-anchor: end; }
.axis { font-size: 6px; }

.details { height: 799px; margin: 0 12px 0 16px; border-top: 4px solid #d2d2d2; padding-top: 16px; }
.fields { padding: 34px 0 0 19px; }
.field { display: flex; align-items: flex-start; margin-bottom: 7px; }
.field label { width: 150px; color: #555; flex: none; }
.field input { flex: 1; height: 51px; min-width: 0; padding-bottom: 2px; border-bottom: 2px solid #e5e5ea; margin-right: 2px; }
.field input.short { flex: none; width: 70px; margin-right: 24px; }
.edit { display: flex; align-items: center; gap: 10px; height: 46px; margin-top: 5px; padding: 0 8px 2px 9px; border: 2px solid #e5e5ea; border-top: 0; border-radius: 0 0 4px 4px; color: #555; }
.caption-col { width: 586px; }
.field textarea { display: block; width: 100%; height: 99px; resize: none; overflow: hidden; white-space: pre; border-bottom: 2px solid #e5e5ea; outline: 0; }
.add { width: 32px; height: 42px; color: #555; }
.moves { display: flex; gap: 14px; margin: 34px 0 0 18px; color: #555; }
.alt { margin-top: 12px; margin-bottom: 18px; }
.alt + .field { margin-bottom: 5px; }

/* Document */
.canvas { display: flex; flex: 1; min-width: 0; background: #f4f4f4; padding-left: 63px; overflow: hidden; }
.paper { flex: 1; min-width: 0; background: #fff; padding: 0 128px; margin: -4px 64px 0 0; font: 33px/48px "Liberation Serif", serif; white-space: nowrap; }
.paper p, .paper h3 { margin-bottom: 24px; }
.paper h3 { font: inherit; font-style: italic; }
.paper .upright { font-style: normal; }
.paper a { color: #4c82ee; text-decoration: none; }
del { background: #fcee96; text-decoration-thickness: 3px; }
ins { color: #46a758; text-decoration: none; }
figure { display: flex; flex-direction: column; align-items: center; margin: 64px 0; padding: 34px 0 32px; background: #fcfdff; }
.map-full { width: 678px; height: 792px; margin-bottom: 62px; }
figcaption { display: flex; align-items: center; }
.grip { margin-right: 14px; }
.cursor { width: 2px; height: 32px; background: #1a1a1a; }
.scrollbar { width: 16px; flex: none; background: #eff2f5; padding-top: 346px; }
.thumb { height: 186px; background: #d0d7e2; }

/* Map */
.land { fill: #f0eeea; stroke: #dfe6f5; stroke-width: 3; }
.relief { fill: none; stroke: #e2e0da; stroke-width: 18; stroke-linecap: round; stroke-dasharray: 12 22 30 18; }
.river { fill: none; stroke: #bfd0f0; stroke-width: 4; }
.lake { fill: #b0c3ee; }
.road { fill: none; stroke: #e3d0e0; stroke-width: 8; }
.border { fill: none; stroke: #828282; stroke-width: 7; }
.towns { fill: #f08040; }
.place { font: 14px/18px "Open Sans", sans-serif; fill: #5c5c64; }
.city { font-size: 18px; fill: #4c4c54; }
.town { font-size: 16px; }
.sea { font-size: 13px; fill: #4a62b4; }
.country { font-size: 19px; font-weight: 700; fill: #1e1e24; }
.dot-a { fill: #2f7fe8; stroke: #1f5fc0; stroke-width: 1; }
.dot-g { fill: #b09440; stroke: #80691f; stroke-width: 1; }
.badges { font: 600 15px/18px "Open Sans", sans-serif; fill: #f4f4f6; text-anchor: middle; }
.badges rect { fill: #50505a; fill-opacity: .74; }

/* Status bar */
.statusbar { display: flex; align-items: center; height: 80px; flex: none; background: #dfe9fb; padding: 0 16px 2px; color: #555; }
.statusbar button { display: flex; align-items: center; }
.statusbar button::before { content: "/"; margin: 0 3px; }
.statusbar span + button::before { margin-left: 0; }
.statusbar .caret { margin-left: 3px; }
.version { margin-left: auto; color: #1a1a1a; }
```
